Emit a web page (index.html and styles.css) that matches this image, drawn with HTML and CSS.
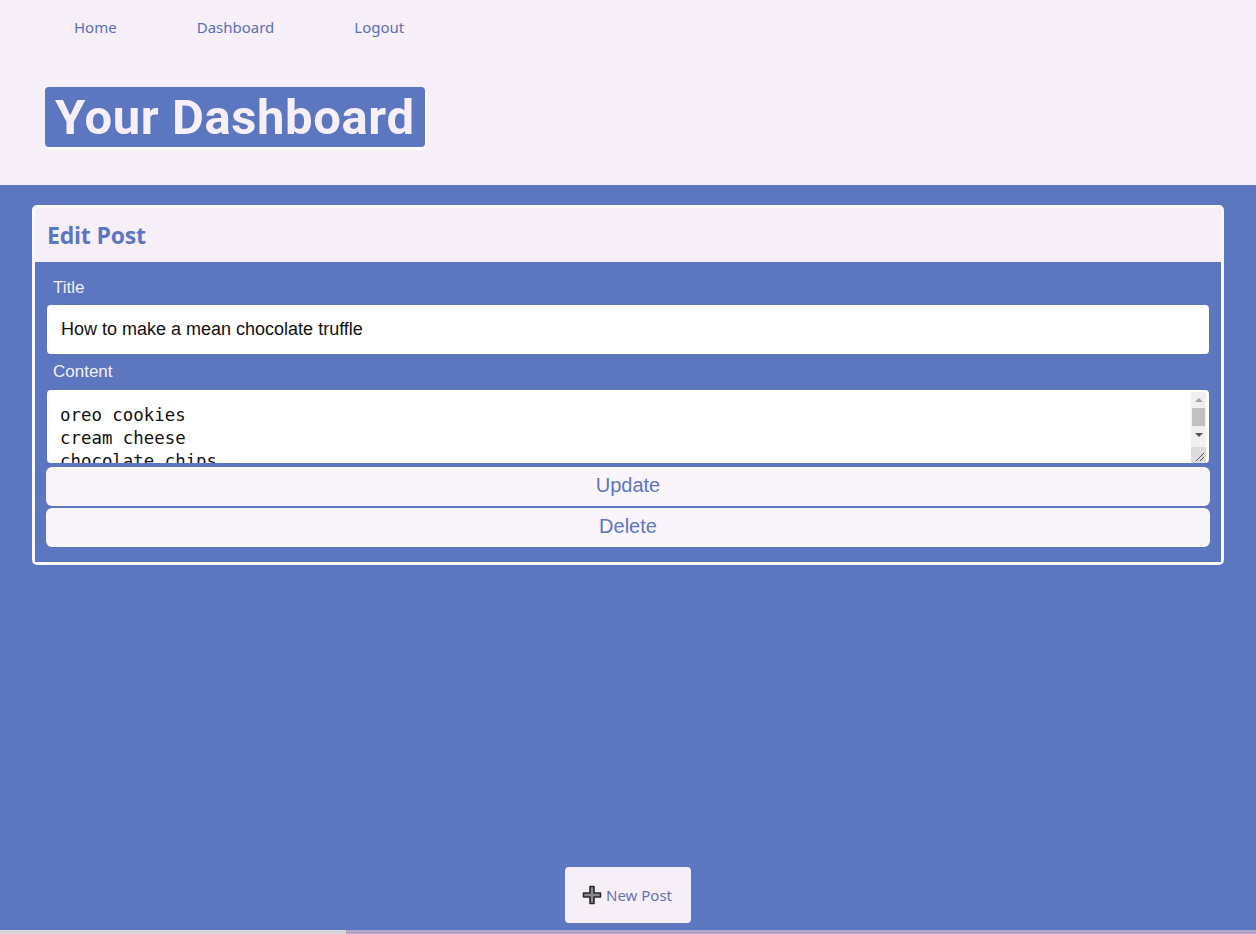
FILE: index.html
```html
<!DOCTYPE html>
<html lang="en">
<head>
<meta charset="utf-8">
<title>Your Dashboard</title>
<link rel="stylesheet" href="styles.css">
</head>
<body>
<header class="top">
  <nav class="nav">
    <a class="nav-link" href="#">Home</a>
    <a class="nav-link" href="#">Dashboard</a>
    <a class="nav-link" href="#">Logout</a>
  </nav>
  <h1 class="page-title">Your Dashboard</h1>
</header>
<main class="main">
  <section class="card">
    <div class="card-head"><h2 class="card-title">Edit Post</h2></div>
    <form class="card-body">
      <label class="field-label" for="title">Title</label>
      <input class="field-input" id="title" type="text" value="How to make a mean chocolate truffle">
      <label class="field-label label-content" for="content">Content</label>
      <div class="area-wrap">
        <textarea class="field-area" id="content">oreo cookies
cream cheese
chocolate chips
heavy cream
</textarea>
        <div class="fake-scroll" aria-hidden="true">
          <span class="arrow-up"></span>
          <span class="thumb"></span>
          <span class="arrow-down"></span>
        </div>
        <div class="resizer" aria-hidden="true">
          <svg width="15" height="16" viewBox="0 0 15 16"><path d="M5 14L13 6M9 14L13 10" stroke="#555" stroke-width="1"/></svg>
        </div>
      </div>
      <button class="btn btn-update" type="button">Update</button>
      <button class="btn btn-delete" type="button">Delete</button>
    </form>
  </section>
  <div class="spacer"></div>
  <button class="new-post" type="button">
    <svg class="plus" width="20" height="20" viewBox="0 0 20 20"><path d="M8 1.5h4v6.5h6.5v4h-6.5v6.5h-4v-6.5h-6.5v-4h6.5z" fill="#8a8a8a" stroke="#2a2a2a" stroke-width="1.6" stroke-linejoin="round"/></svg>
    <span>New Post</span>
  </button>
</main>
<div class="bottom-strip"><div class="strip-left"></div><div class="strip-right"></div></div>
</body>
</html>
```
FILE: styles.css
```css
html, body {
  margin: 0;
  padding: 0;
}
body {
  background: #5c76bf;
  font-family: "Noto Sans", "Liberation Sans", sans-serif;
  height: 934px;
  overflow: hidden;
  display: flex;
  flex-direction: column;
}
.top {
  background: #f7eff7;
  height: 185px;
  box-sizing: border-box;
  padding-top: 17px;
}
.nav {
  display: flex;
  padding-left: 74px;
  height: 20px;
  align-items: center;
}
.nav-link {
  color: #5d6fb5;
  text-decoration: none;
  font-size: 15px;
  margin-right: 80px;
}
.page-title {
  display: inline-block;
  margin: 50px 0 0 45px;
  background: #5c76bf;
  color: #f7eff7;
  font-family: Roboto, "Noto Sans", sans-serif;
  font-size: 49px;
  font-weight: 700;
  line-height: 62px;
  height: 60px;
  padding: 0 10px;
  border-radius: 4px;
  box-shadow: 2px 3px 0 #fbf8fb;
  letter-spacing: 0.6px;
}
.main {
  flex: 1;
  display: flex;
  flex-direction: column;
  align-items: stretch;
  padding: 20px 32px 7px;
}
.card {
  background: #f7eff7;
  border: 3px solid #fbf8fb;
  border-radius: 5px;
}
.card-head {
  display: flex;
  align-items: center;
  padding-left: 12px;
  margin-top: -3px;
  padding-top: 3px;
  box-sizing: border-box;
  height: 57px;
}
.card-title {
  margin: 0;
  color: #5c76bf;
  font-size: 23px;
  font-weight: 700;
  font-family: "Open Sans", "Noto Sans", sans-serif;
  letter-spacing: -0.2px;
}
.card-body {
  background: #5c76bf;
  padding: 16px 12px 15px;
  display: flex;
  flex-direction: column;
}
.field-label {
  color: #f3eef7;
  font-family: "Liberation Sans", Arial, sans-serif;
  font-size: 17px;
  line-height: 20px;
  padding-left: 6px;
  margin-bottom: 7px;
}
.label-content {
  margin-top: 8px;
  margin-bottom: 8px;
}
.field-input {
  height: 49px;
  border: none;
  border-radius: 4px;
  background: #fff;
  padding: 0 14px;
  font-family: "Liberation Sans", Arial, sans-serif;
  font-size: 18px;
  color: #111;
  box-sizing: border-box;
  outline: none;
}
.area-wrap {
  position: relative;
  height: 73px;
}
.field-area {
  display: block;
  width: 100%;
  height: 73px;
  border: none;
  border-radius: 4px;
  background: #fff;
  padding: 14px 24px 0 13px;
  font-family: "DejaVu Sans Mono", monospace;
  font-size: 17.4px;
  line-height: 23px;
  color: #111;
  box-sizing: border-box;
  resize: none;
  overflow: hidden;
  outline: none;
}
.fake-scroll {
  position: absolute;
  top: 2px;
  right: 3px;
  width: 15px;
  height: 55px;
  background: #f0f0f0;
  display: flex;
  flex-direction: column;
  align-items: center;
  padding-top: 6px;
  box-sizing: border-box;
}
.arrow-up {
  width: 0;
  height: 0;
  border-left: 4px solid transparent;
  border-right: 4px solid transparent;
  border-bottom: 4px solid #a3a3a3;
}
.thumb {
  width: 13px;
  height: 18px;
  background: #c1c1c1;
  margin-top: 6px;
}
.arrow-down {
  width: 0;
  height: 0;
  border-left: 4px solid transparent;
  border-right: 4px solid transparent;
  border-top: 4px solid #505050;
  margin-top: 7px;
}
.resizer {
  position: absolute;
  right: 3px;
  bottom: 0;
  width: 15px;
  height: 16px;
  background: #dcdcdc;
}
.resizer svg {
  display: block;
}
.btn {
  height: 39px;
  border: none;
  border-radius: 6px;
  background: #faf5fa;
  color: #5c76bf;
  font-family: "Liberation Sans", Arial, sans-serif;
  font-size: 20px;
  margin: 0 -1px;
  padding: 0 0 2px;
}
.btn-update {
  margin-top: 4px;
}
.btn-delete {
  margin-top: 2px;
}
.spacer {
  flex: 1;
}
.new-post {
  align-self: center;
  width: 126px;
  height: 56px;
  border: none;
  border-radius: 4px;
  background: #f7eff7;
  color: #6672b0;
  font-family: "Noto Sans", sans-serif;
  font-size: 15px;
  display: flex;
  align-items: center;
  justify-content: center;
  gap: 4px;
  padding: 0 2px 0 0;
}
.plus {
  display: block;
}
.bottom-strip {
  height: 4px;
  display: flex;
}
.strip-left {
  width: 346px;
  background: #d6d6d9;
}
.strip-right {
  flex: 1;
  background: #b3a3c6;
}
```
